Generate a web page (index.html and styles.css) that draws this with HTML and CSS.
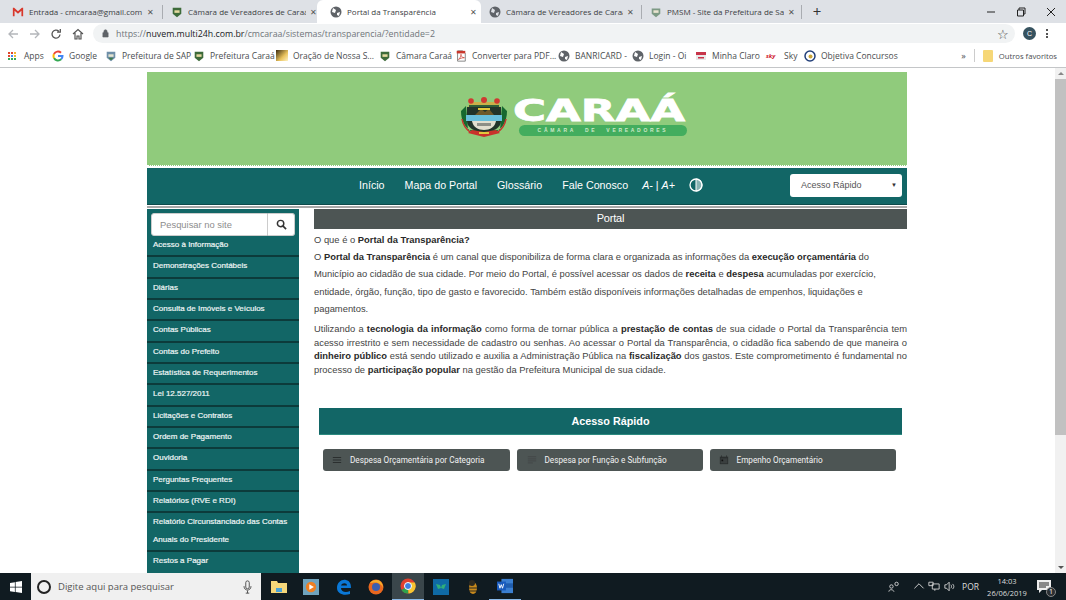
FILE: index.html
```html
<!DOCTYPE html>
<html lang="pt-BR">
<head>
<meta charset="UTF-8">
<title>Portal da Transparência</title>
<link rel="stylesheet" href="styles.css">
</head>
<body>
<div class="screen">

  <div class="tabstrip">
    <div class="tab tab-first">
      <svg class="ico" viewBox="0 0 14 12"><path d="M1 11V1h1.5L7 5l4.500-4H13v10h-2V4.500L7 8 3 4.500V11z" fill="#d8382c"/></svg>
      <span class="tab-title">Entrada - cmcaraa@gmail.com - C</span><span class="tab-x">✕</span>
    </div>
    <div class="tab tab-second">
      <svg class="ico" viewBox="0 0 12 14"><path d="M1 2h10v7l-5 4-5-4z" fill="#3d6b3a"/><rect x="3" y="5" width="6" height="3" fill="#e4d9a0"/></svg>
      <span class="tab-title">Câmara de Vereadores de Caraá</span><span class="tab-x">✕</span>
    </div>
    <div class="tab tab-active">
      <svg class="ico" viewBox="0 0 12 12"><circle cx="6" cy="6" r="5.500" fill="#5f6368"/><path d="M3 2l3 2-1 3-3-1zM7 7l3-1-1 4-2-1z" fill="#fff"/></svg>
      <span class="tab-title">Portal da Transparência</span><span class="tab-x">✕</span>
    </div>
    <div class="tab tab-fourth">
      <svg class="ico" viewBox="0 0 12 12"><circle cx="6" cy="6" r="5.500" fill="#5f6368"/><path d="M3 2l3 2-1 3-3-1zM7 7l3-1-1 4-2-1z" fill="#dee1e6"/></svg>
      <span class="tab-title">Câmara de Vereadores de Caraá -</span><span class="tab-x">✕</span>
    </div>
    <div class="tab tab-last">
      <svg class="ico" viewBox="0 0 12 14"><path d="M1 3h10v6l-5 4-5-4z" fill="#7d9a84"/><rect x="3" y="5" width="6" height="3" fill="#e9e4d0"/></svg>
      <span class="tab-title">PMSM - Site da Prefeitura de San</span><span class="tab-x">✕</span>
    </div>
    <span class="tab-new">+</span>
    <div class="win-controls">
      <svg viewBox="0 0 10 10"><path d="M1 5h8" stroke="#222" fill="none"/></svg>
      <svg viewBox="0 0 10 10"><path d="M1.500 3h6v6h-6zM3 3V1h6v6H7.500" stroke="#222" fill="none"/></svg>
      <svg viewBox="0 0 10 10"><path d="M1 1l8 8M9 1l-8 8" stroke="#222" fill="none"/></svg>
    </div>
  </div>

  <div class="toolbar">
    <svg class="nav-ico" viewBox="0 0 12 12"><path d="M11 6H2M6 2L2 6l4 4" stroke="#b4b7bb" stroke-width="1.300" fill="none"/></svg>
    <svg class="nav-ico" viewBox="0 0 12 12"><path d="M1 6h9M6 2l4 4-4 4" stroke="#b4b7bb" stroke-width="1.300" fill="none"/></svg>
    <svg class="nav-ico" viewBox="0 0 12 12"><path d="M10 6.500A4 4 0 1 1 8.800 3.200M10.300 1v3.200H7.100" stroke="#555" stroke-width="1.300" fill="none"/></svg>
    <svg class="nav-ico" viewBox="0 0 12 12"><path d="M1 6l5-4.500L11 6M3 5v6h2V8h2v3h2V5" stroke="#555" stroke-width="1.200" fill="none"/></svg>
    <div class="omnibox">
      <svg class="lock" viewBox="0 0 8 10"><path d="M1 4h6v5H1zM2.200 4V2.500a1.800 1.800 0 0 1 3.600 0V4" fill="#5f6368" stroke="#5f6368" stroke-width=".7" fill-rule="evenodd"/></svg>
      <span class="url"><span class="url-dim">https://</span>nuvem.multi24h.com.br<span class="url-dim">/cmcaraa/sistemas/transparencia/?entidade=2</span></span>
      <span class="star">☆</span>
    </div>
    <span class="avatar">C</span>
    <span class="kebab"><i></i><i></i><i></i></span>
  </div>

  <div class="bookmarks">
    <div class="bm bm-apps"><span class="apps-grid"><i></i><i></i><i></i><i></i><i></i><i></i><i></i><i></i><i></i></span>Apps</div>
    <div class="bm bm-google">
      <svg class="ico" viewBox="0 0 12 12" fill="none" stroke-width="2">
        <path d="M6 6h4.500a4.500 4.500 0 0 1-1.400 3.300" stroke="#4285f4"/>
        <path d="M9.100 9.300A4.500 4.500 0 0 1 2 8" stroke="#34a853"/>
        <path d="M2 8a4.500 4.500 0 0 1 0-4" stroke="#fbbc05"/>
        <path d="M2 4a4.500 4.500 0 0 1 7-1.300" stroke="#ea4335"/>
      </svg>Google
    </div>
    <div class="bm bm-sap"><svg class="ico" viewBox="0 0 12 14"><path d="M1 2h10v7l-5 4-5-4z" fill="#6f8fa8"/><rect x="3" y="5" width="6" height="3" fill="#e4e4d0"/><path d="M3 9h6l-3 3z" fill="#3d7a45"/></svg>Prefeitura de SAP</div>
    <div class="bm bm-car"><svg class="ico" viewBox="0 0 12 14"><path d="M1 2h10v7l-5 4-5-4z" fill="#3d6b3a"/><rect x="3" y="5" width="6" height="3" fill="#e4d9a0"/></svg>Prefeitura Caraá</div>
    <div class="bm bm-ora"><span class="ora-mark"></span>Oração de Nossa S...</div>
    <div class="bm bm-cam"><svg class="ico" viewBox="0 0 12 14"><path d="M1 2h10v7l-5 4-5-4z" fill="#3d6b3a"/><rect x="3" y="5" width="6" height="3" fill="#e4d9a0"/></svg>Câmara Caraá</div>
    <div class="bm bm-pdf"><svg class="ico" viewBox="0 0 12 14"><path d="M2 1h6l3 3v9H2z" fill="#fff" stroke="#777"/><path d="M1 1h10v3H1z" fill="#c9372c"/><path d="M3 11c2-1 3-4 3-6 0 2 1 4 4 4-3 0-5 1-7 2z" fill="none" stroke="#c9372c" stroke-width=".8"/></svg>Converter para PDF...</div>
    <div class="bm bm-ban"><svg class="ico" viewBox="0 0 12 12"><circle cx="6" cy="6" r="5.500" fill="#5f6368"/><path d="M3 2l3 2-1 3-3-1zM7 7l3-1-1 4-2-1z" fill="#fff"/></svg>BANRICARD -</div>
    <div class="bm bm-oi"><svg class="ico" viewBox="0 0 12 12"><circle cx="6" cy="6" r="5.500" fill="#5f6368"/><path d="M3 2l3 2-1 3-3-1zM7 7l3-1-1 4-2-1z" fill="#fff"/></svg>Login - Oi</div>
    <div class="bm bm-claro"><svg class="ico" viewBox="0 0 12 12"><rect x="1" y="2" width="10" height="8" fill="#e9e9e9"/><rect x="1" y="2" width="10" height="3" fill="#c7354a"/><rect x="3" y="7" width="6" height="1.500" fill="#c7354a"/></svg>Minha Claro</div>
    <div class="bm bm-sky"><span class="sky-mark">sky</span>Sky</div>
    <div class="bm bm-obj"><svg class="ico" viewBox="0 0 12 12"><circle cx="6" cy="6" r="5" fill="#fff" stroke="#23407a" stroke-width="1.500"/><circle cx="6.500" cy="6.500" r="2" fill="#c9a53a"/></svg>Objetiva Concursos</div>
    <div class="bm-right">
      <span class="bm-more">»</span>
      <span class="bm-folder"></span>
      <span>Outros favoritos</span>
    </div>
  </div>

  <div class="viewport">
    <div class="page">
      <div class="wrap">
        <div class="banner">
          <svg class="crest" viewBox="0 0 48 40">
            <path d="M1 14c0 11 5 18 13 22h20c8-4 13-11 13-22l-5-5-2 24H8L6 9z" fill="#16682f"/>
            <path d="M2 22c1 6 4 10 8 13M46 22c-1 6-4 10-8 13" stroke="#c8322c" stroke-width="1.500" fill="none"/>
            <path d="M10 5h28l2 5H8z" fill="#c9b04a"/>
            <path d="M9 8h30v2H9z" fill="#2f5f38"/>
            <circle cx="11" cy="4" r="2.800" fill="#cf3a30"/><circle cx="24" cy="3" r="3" fill="#cf3a30"/><circle cx="37" cy="4" r="2.800" fill="#cf3a30"/>
            <path d="M7 10h34v14c0 7-8 11-17 11S7 31 7 24z" fill="#22352a"/>
            <path d="M15 18l6-6 4 3 4-3 5 6z" fill="#6e5a2a"/>
            <path d="M18 11h12v2H18z" fill="#e2c83c"/>
            <rect x="6" y="18" width="36" height="6" fill="#68c0dc"/>
            <path d="M12 24h24c-1 6-6 9-12 9s-11-3-12-9z" fill="#e2dfcf"/>
            <path d="M17 26h14v3H17z" fill="#8d8f86"/>
            <path d="M12 33l12 2 12-2 4 3-16 4-16-4z" fill="#c8322c"/>
            <path d="M19 35h10v2H19z" fill="#e2c83c"/>
          </svg>
          <div class="logo-text">
            <div class="logo-name">CARAÁ</div>
            <div class="logo-sub">CÂMARA DE VEREADORES</div>
          </div>
        </div>

        <nav class="topnav">
          <a>Início</a>
          <a>Mapa do Portal</a>
          <a>Glossário</a>
          <a>Fale Conosco</a>
          <span class="font-size"><em>A-</em> | <em>A+</em></span>
          <svg class="contrast" viewBox="0 0 14 14">
            <circle cx="7" cy="7" r="6" fill="none" stroke="#fff" stroke-width="1.300"/>
            <path d="M7 1a6 6 0 0 1 0 12zM7 3h5M7 5h6M7 7h6M7 9h6M7 11h5" fill="none" stroke="#fff"/>
          </svg>
          <div class="quick-select">Acesso Rápido<span class="caret">▼</span></div>
        </nav>

        <div class="columns">
          <aside class="sidebar">
            <div class="search">
              <span class="search-input">Pesquisar no site</span>
              <span class="search-btn">
                <svg viewBox="0 0 12 12"><circle cx="5" cy="5" r="3.500" fill="none" stroke="#333" stroke-width="1.600"/><path d="M7.500 7.500L11 11" stroke="#333" stroke-width="1.800"/></svg>
              </span>
            </div>
            <a class="side-link">Acesso à Informação</a>
            <a class="side-link">Demonstrações Contábeis</a>
            <a class="side-link">Diárias</a>
            <a class="side-link">Consulta de Imóveis e Veículos</a>
            <a class="side-link">Contas Públicas</a>
            <a class="side-link">Contas do Prefeito</a>
            <a class="side-link">Estatística de Requerimentos</a>
            <a class="side-link">Lei 12.527/2011</a>
            <a class="side-link">Licitações e Contratos</a>
            <a class="side-link">Ordem de Pagamento</a>
            <a class="side-link">Ouvidoria</a>
            <a class="side-link">Perguntas Frequentes</a>
            <a class="side-link">Relatórios (RVE e RDI)</a>
            <a class="side-link side-link-tall">Relatório Circunstanciado das Contas Anuais do Presidente</a>
            <a class="side-link">Restos a Pagar</a>
          </aside>

          <main class="content">
            <h2 class="portal-title">Portal</h2>
            <p class="intro-q">O que é o <b>Portal da Transparência?</b></p>
            <p class="intro">O <b>Portal da Transparência</b> é um canal que disponibiliza de forma clara e organizada as informações da <b>execução orçamentária</b> do Município ao cidadão de sua cidade. Por meio do Portal, é possível acessar os dados de <b>receita</b> e <b>despesa</b> acumuladas por exercício, entidade, órgão, função, tipo de gasto e favorecido. Também estão disponíveis informações detalhadas de empenhos, liquidações e pagamentos.</p>
            <p class="body-text">Utilizando a <b>tecnologia da informação</b> como forma de tornar pública a <b>prestação de contas</b> de sua cidade o Portal da Transparência tem acesso irrestrito e sem necessidade de cadastro ou senhas. Ao acessar o Portal da Transparência, o cidadão fica sabendo de que maneira o <b>dinheiro público</b> está sendo utilizado e auxilia a Administração Pública na <b>fiscalização</b> dos gastos. Este comprometimento é fundamental no processo de <b>participação popular</b> na gestão da Prefeitura Municipal de sua cidade.</p>

            <h3 class="quick-title">Acesso Rápido</h3>
            <div class="quick-buttons">
              <a class="quick-btn">
                <svg viewBox="0 0 12 12"><path d="M1 3h10M1 6h10M1 9h10" stroke="#2b2f2f" stroke-width="1.200"/></svg>
                Despesa Orçamentária por Categoria
              </a>
              <a class="quick-btn quick-btn-b">
                <svg viewBox="0 0 12 12"><path d="M1 2h10M1 4.500h10M1 7h10M1 9.500h6" stroke="#454a4a" stroke-width="1.500"/></svg>
                Despesa por Função e Subfunção
              </a>
              <a class="quick-btn quick-btn-c">
                <svg viewBox="0 0 12 12"><path d="M1 2h10v9H1z" fill="#2b2f2f"/><path d="M3 .5v2M9 .5v2" stroke="#2b2f2f"/><rect x="2" y="4" width="8" height="6" fill="#3a3f3f"/><rect x="3" y="5.500" width="2" height="2" fill="#111"/></svg>
                Empenho Orçamentário
              </a>
            </div>
          </main>
        </div>
      </div>
    </div>
    <div class="scrollbar">
      <span class="arrow arrow-up"></span>
      <span class="thumb"></span>
      <span class="arrow arrow-down"></span>
    </div>
  </div>

  <div class="taskbar">
    <svg class="start" viewBox="0 0 16 16"><path d="M0 2.500l6.500-1v6H0zM7.500 1.300L16 0v7.500H7.500zM0 8.500h6.500v6l-6.500-1zM7.500 8.500H16V16l-8.500-1.300z" fill="#fff"/></svg>
    <div class="task-search">
      <span class="cortana"></span>
      <span class="task-search-text">Digite aqui para pesquisar</span>
      <svg class="mic" viewBox="0 0 10 16"><rect x="3" y="1" width="4" height="9" rx="2" fill="none" stroke="#444"/><path d="M1 7c0 6 8 6 8 0M5 12v3M3 15h4" fill="none" stroke="#444"/></svg>
    </div>
    <div class="task-apps">
      <span class="task-app"><svg viewBox="0 0 16 14"><path d="M0 1h6l1 2h9v10H0z" fill="#f5d77a"/><rect x="5" y="8" width="6" height="4" fill="#4aa3d8"/></svg></span>
      <span class="task-app"><svg viewBox="0 0 14 14"><rect width="14" height="14" fill="#6fa3bd"/><circle cx="7" cy="7" r="4.500" fill="#ee7f22"/><path d="M5.500 4.500l4 2.500-4 2.500z" fill="#fff"/></svg></span>
      <span class="task-app"><svg viewBox="0 0 16 16"><path d="M15 9H5c0 4 5 5 9 3v3c-6 2-13 0-13-6C1 3 6 0 10 1c4 1 5 4 5 8zM5 6.500h6C11 3.500 6 3.500 5 6.500z" fill="#0a78d7"/></svg></span>
      <span class="task-app"><svg viewBox="0 0 16 16"><circle cx="8" cy="8" r="7.500" fill="#e8671f"/><circle cx="8" cy="8" r="4" fill="#3c5fb0"/><path d="M2 4c2-3 7-4 10-2 2 2 3 4 3 7-1-3-3-4-5-5-3-1-6 0-8 0z" fill="#f6b02a"/></svg></span>
      <span class="task-app task-app-active"><svg viewBox="0 0 16 16"><circle cx="8" cy="8" r="7.500" fill="#e2412f"/><path d="M8 8L1.500 12A7.500 7.500 0 0 0 8.500 15.500z" fill="#2fa24c"/><path d="M8 4.500h6.800a7.500 7.500 0 0 1-6.300 11z" fill="#f7c531"/><circle cx="8" cy="8" r="3.500" fill="#3f7fe0" stroke="#fff"/></svg></span>
      <span class="task-app"><svg viewBox="0 0 16 16"><rect width="16" height="16" fill="#0f6aa5"/><path d="M3 5l4 1 1 3 1-3 4-1-2 5-3-1-3 1z" fill="#2fae7a"/></svg></span>
      <span class="task-app"><svg viewBox="0 0 14 16"><ellipse cx="7" cy="9" rx="4" ry="6" fill="#c98a1c"/><circle cx="6" cy="4" r="3" fill="#2d2a20"/><path d="M3 9h8M3 12h8" stroke="#2d2a20"/></svg></span>
      <span class="task-app task-app-open"><svg viewBox="0 0 18 16"><rect x="5" width="13" height="16" fill="#3b7fd1"/><rect x="5" y="5" width="13" height="5" fill="#1f5dae"/><rect y="3" width="10" height="10" fill="#185abd"/><path d="M2 5.500l1.300 5 1.500-4 1.400 4 1.400-5" stroke="#fff" fill="none"/></svg></span>
    </div>
    <div class="tray">
      <svg class="tray-ico" viewBox="0 0 14 12"><circle cx="4" cy="6" r="2" fill="none" stroke="#ddd"/><circle cx="10" cy="3" r="2" fill="none" stroke="#ddd"/><path d="M1 12c0-3 5-3 6 0" fill="none" stroke="#ddd"/></svg>
      <svg class="tray-ico tray-chevron" viewBox="0 0 12 12"><path d="M1 8l5-5 5 5" fill="none" stroke="#ddd"/></svg>
      <svg class="tray-ico tray-net" viewBox="0 0 14 12"><path d="M1 1h5v4H1zM5 3h8v6H5zM8 9v2" fill="none" stroke="#ddd"/></svg>
      <svg class="tray-ico tray-vol" viewBox="0 0 14 12"><path d="M1 4h2l3-3v10L3 8H1z" fill="none" stroke="#ddd"/><path d="M8 4c1 1 1 3 0 4M10 3c2 2 2 4 0 6" fill="none" stroke="#ddd"/></svg>
      <span class="tray-lang">POR</span>
      <div class="clock"><div>14:03</div><div>26/06/2019</div></div>
      <span class="notif">
        <svg viewBox="0 0 14 13"><path d="M0 0h14v10H5l-3 3v-3H0z" fill="#eee"/><path d="M2 3h10M2 5h10M2 7h7" stroke="#222"/></svg>
        <span class="notif-badge">1</span>
      </span>
    </div>
  </div>

</div>
</body>
</html>
```

FILE: styles.css
```css
* {
  box-sizing: border-box;
}

html, body {
  margin: 0;
  height: 100%;
  overflow: hidden;
}

body {
  font-family: "Liberation Sans", Arial, sans-serif;
  font-size: 10px;
  color: #333;
  background: #fff;
}

.screen {
  display: flex;
  flex-direction: column;
  height: 600px;
}

/* browser tabs */
.tabstrip {
  display: flex;
  align-items: flex-end;
  height: 23px;
  background: #dee1e6;
  font-family: "Open Sans", sans-serif;
  font-size: 8px;
  color: #3c4043;
  flex: none;
}

.tab {
  display: flex;
  align-items: center;
  height: 23px;
  flex: none;
  background: linear-gradient(#a9acb1, #a9acb1) right center / 1px 14px no-repeat;
}

.tab-first {
  width: 163px;
  padding: 0 9px 0 12px;
}

.tab-second {
  width: 154px;
  padding: 0 0 0 8px;
  background: none;
}

.tab-active {
  width: 164px;
  padding: 0 4px 0 13px;
  background: #fff;
  border-radius: 6px 6px 0 0;
}

.tab-fourth {
  width: 161px;
  padding: 0 8px 0 8px;
}

.tab-last {
  width: 160px;
  padding: 0 7px 0 8px;
}

.tab-title {
  flex: 1;
  overflow: hidden;
  white-space: nowrap;
  margin-left: 5px;
}

.tab-x {
  font-size: 8px;
  color: #555;
  margin-left: 4px;
}

.ico {
  width: 12px;
  height: 12px;
  flex: none;
}

.tab-new {
  width: 26px;
  height: 23px;
  line-height: 22px;
  text-align: center;
  font-size: 15px;
  color: #333;
  margin-left: 2px;
}

.win-controls {
  display: flex;
  margin-left: auto;
  height: 23px;
  align-items: center;
  gap: 20px;
  padding-right: 10px;
}

.win-controls svg {
  width: 10px;
  height: 10px;
}

/* address bar */
.toolbar {
  display: flex;
  align-items: center;
  height: 21px;
  background: #fff;
  flex: none;
  padding-left: 7px;
}

.nav-ico {
  width: 12px;
  height: 12px;
  margin-right: 9.500px;
  flex: none;
}

.omnibox {
  display: flex;
  align-items: center;
  width: 922px;
  height: 19px;
  padding: 0 6px 0 9px;
  background: #f1f3f4;
  border-radius: 10px;
  font-family: "Open Sans", sans-serif;
  font-size: 8.800px;
  color: #202124;
  flex: none;
}

.lock {
  width: 7px;
  height: 9px;
  margin-right: 7px;
}

.url-dim {
  color: #70757a;
}

.star {
  margin-left: auto;
  font-size: 13px;
  color: #444;
}

.avatar {
  width: 13px;
  height: 13px;
  margin-left: 8px;
  border-radius: 50%;
  background: #36525f;
  color: #fff;
  font-size: 7px;
  line-height: 13px;
  text-align: center;
  flex: none;
}

.kebab {
  display: flex;
  flex-direction: column;
  gap: 1.500px;
  margin-left: 10px;
}

.kebab i {
  display: block;
  width: 2px;
  height: 2px;
  background: #555;
}

/* bookmarks */
.bookmarks {
  display: flex;
  align-items: center;
  height: 24px;
  background: #fff;
  border-bottom: 1px solid #c4c6c8;
  font-family: "Open Sans", sans-serif;
  font-size: 8.500px;
  color: #4a4d50;
  flex: none;
  padding-left: 8px;
}

.bm {
  display: flex;
  align-items: center;
  gap: 5px;
  white-space: nowrap;
  flex: none;
}

.bm-apps { width: 44px; gap: 8px; }
.bm-google { width: 53px; }
.bm-sap { width: 88px; }
.bm-car { width: 83px; }
.bm-ora { width: 103px; }
.bm-cam { width: 76px; }
.bm-pdf { width: 103px; }
.bm-ban { width: 74px; }
.bm-oi { width: 63px; }
.bm-claro { width: 71px; }
.bm-sky { width: 38px; }

.apps-grid {
  display: grid;
  grid-template-columns: repeat(3, 2px);
  gap: 1px;
}

.apps-grid i {
  width: 2px;
  height: 2px;
  background: #e0452c;
}

.apps-grid i:nth-child(3n) { background: #f2b632; }
.apps-grid i:nth-child(n+7) { background: #34a853; }
.apps-grid i:nth-child(5) { background: #4285f4; }

.ora-mark {
  width: 12px;
  height: 11px;
  background: linear-gradient(135deg, #3a2a10, #e9c25c 60%, #fff3c4);
}

.sky-mark {
  width: 13px;
  color: #d0202e;
  font-size: 6px;
  font-weight: bold;
  font-style: italic;
}

.bm-right {
  display: flex;
  align-items: center;
  margin-left: auto;
  padding-right: 9px;
  font-size: 7.700px;
}

.bm-more {
  font-size: 9px;
  padding-right: 8px;
  border-right: 1px solid #ccc;
  margin-right: 8px;
}

.bm-folder {
  width: 10px;
  height: 12px;
  margin-right: 6px;
  background: #f6d777;
  border-radius: 1px;
}

/* page area */
.viewport {
  display: flex;
  flex: 1;
  min-height: 0;
}

.page {
  flex: 1;
  min-width: 0;
  overflow: hidden;
  background: #fff;
}

.wrap {
  width: 760px;
  margin-left: 147px;
  padding-top: 4px;
}

.banner {
  display: flex;
  align-items: center;
  gap: 5px;
  height: 94px;
  padding: 0 0 4px 313px;
  background: #90cb7c;
  border-bottom: 1px dotted #fff;
}

.crest {
  width: 48px;
  height: 40px;
  flex: none;
}

.logo-text {
  width: 175px;
}

.logo-name {
  height: 26px;
  font-family: "DejaVu Sans", sans-serif;
  font-size: 30px;
  line-height: 28px;
  font-weight: bold;
  color: #fff;
  -webkit-text-stroke: 0.800px #fff;
  transform: scaleX(1.500);
  transform-origin: left;
}

.logo-sub {
  width: 168px;
  height: 11px;
  margin: 2px 0 0 6px;
  border-radius: 6px;
  background: #43ad5e;
  color: #cfe9c8;
  font-size: 5px;
  font-weight: bold;
  line-height: 11px;
  letter-spacing: 2.700px;
  text-align: center;
  word-spacing: 5px;
}

.topnav {
  display: flex;
  align-items: center;
  height: 37px;
  margin-top: 2px;
  padding: 0 5px 2px 212px;
  background: #126666;
  border-bottom: 1px solid #0d4a4a;
  color: #fff;
  font-size: 10.700px;
}

.topnav a {
  margin-right: 20px;
}

.font-size {
  margin-left: -6px;
}

.contrast {
  width: 14px;
  height: 14px;
  margin-left: 14px;
}

.quick-select {
  display: flex;
  align-items: center;
  justify-content: space-between;
  width: 112px;
  height: 23px;
  margin-left: auto;
  padding: 0 5px 0 11px;
  border-radius: 3px;
  background: #fff;
  color: #555;
  font-size: 9px;
}

.caret {
  font-size: 6px;
  color: #333;
}

.columns {
  display: flex;
  gap: 15px;
  align-items: flex-start;
  margin-top: 1px;
  padding-top: 1px;
  border-top: 2px solid #a8a8a8;
}

/* left menu */
.sidebar {
  width: 152px;
  flex: none;
  background: #126666;
}

.search {
  display: flex;
  height: 27px;
  margin: 0 4px;
  padding-top: 4px;
}

.search-input {
  flex: 1;
  height: 23px;
  padding-left: 8px;
  background: #fff;
  border: 1px solid #ccc;
  border-radius: 3px 0 0 3px;
  color: #8d8d8d;
  font-size: 9.400px;
  line-height: 21px;
}

.search-btn {
  display: flex;
  align-items: center;
  justify-content: center;
  width: 27px;
  height: 23px;
  background: #fff;
  border: 1px solid #ccc;
  border-left: 0;
  border-radius: 0 3px 3px 0;
}

.search-btn svg {
  width: 11px;
  height: 11px;
}

.side-link {
  display: block;
  padding: 2px 6px 0;
  min-height: 21.350px;
  border-bottom: 2px solid #0c3b3b;
  color: #eef5f5;
  font-size: 8px;
  line-height: 14px;
  -webkit-text-stroke: 0.200px #eef5f5;
}

.side-link-tall {
  padding-top: 0;
  padding-bottom: 1px;
  line-height: 18px;
  min-height: 39px;
}

.side-link:last-child {
  border-bottom: 0;
}

/* main column */
.content {
  flex: 1;
  min-width: 0;
}

.portal-title {
  height: 20px;
  margin: 0 0 4px;
  background: #4d5554;
  color: #fff;
  font-size: 11px;
  font-weight: normal;
  line-height: 19px;
  text-align: center;
  letter-spacing: -0.200px;
}

.content p {
  margin: 0;
  color: #444;
  font-size: 9.400px;
}

.content b {
  color: #2a2a2a;
}

.intro-q {
  line-height: 14px;
}

.content .intro {
  line-height: 17.300px;
  margin: 1px 0 5px;
}

.body-text {
  line-height: 13.500px;
  text-align: justify;
}

.quick-title {
  height: 27px;
  margin: 32px 5px 14px;
  background: #126666;
  border-bottom: 1px solid #2c8a80;
  color: #fff;
  font-size: 10.800px;
  line-height: 26px;
  text-align: center;
}

.quick-buttons {
  display: flex;
  margin: 0 5px 0 9px;
  gap: 6.500px;
}

.quick-btn {
  display: flex;
  align-items: center;
  gap: 8px;
  width: 187px;
  height: 22px;
  padding-left: 9px;
  border-radius: 3px;
  background: #4d5554;
  color: #f2f2f2;
  font-family: Roboto, sans-serif;
  font-size: 8.200px;
}

.quick-btn-b {
  padding-left: 10px;
  width: 186.500px;
}

.quick-btn-c {
  width: 186px;
}

.quick-btn svg {
  width: 10px;
  height: 10px;
  flex: none;
}

/* window scrollbar */
.scrollbar {
  display: flex;
  flex-direction: column;
  align-items: center;
  width: 11px;
  background: #f1f1f1;
  flex: none;
}

.thumb {
  width: 100%;
  height: 356px;
  background: #c1c1c1;
}

.arrow {
  width: 0;
  height: 0;
  border-left: 3px solid transparent;
  border-right: 3px solid transparent;
  margin: 4px 0;
}

.arrow-up {
  border-bottom: 3px solid #888;
}

.arrow-down {
  margin-top: auto;
  border-top: 3px solid #555;
}

/* windows taskbar */
.taskbar {
  display: flex;
  align-items: center;
  height: 27px;
  background: #101b21;
  color: #ddd;
  flex: none;
}

.start {
  width: 12px;
  height: 12px;
  margin: 0 9px 0 10px;
  flex: none;
}

.task-search {
  display: flex;
  align-items: center;
  width: 230px;
  height: 27px;
  padding: 0 9px 0 6px;
  background: #f0f0f0;
  color: #555;
  font-family: "Open Sans", sans-serif;
  font-size: 9.500px;
  flex: none;
}

.cortana {
  width: 14px;
  height: 14px;
  margin-right: 7px;
  border: 2px solid #222;
  border-radius: 50%;
}

.mic {
  width: 9px;
  height: 14px;
  margin-left: auto;
}

.task-apps {
  display: flex;
  height: 27px;
  margin-left: 2px;
}

.task-app {
  display: flex;
  align-items: center;
  justify-content: center;
  width: 32.300px;
  height: 27px;
}

.task-app svg {
  width: 16px;
  height: 16px;
}

.task-app-active {
  background: #3a464b;
  border-bottom: 1px solid #8ab9e8;
}

.task-app-open {
  border-bottom: 1px solid #8ab9e8;
}

.tray {
  display: flex;
  align-items: center;
  margin-left: auto;
  font-family: "Open Sans", sans-serif;
  font-size: 8.500px;
}

.tray-ico {
  width: 12px;
  height: 11px;
}

.tray-chevron {
  margin-left: 13px;
}

.tray-net {
  margin-left: 3px;
}

.tray-vol {
  margin-left: 4px;
}

.tray-lang {
  margin: 0 3px 0 6px;
}

.clock {
  width: 50px;
  text-align: center;
  font-size: 7.500px;
  line-height: 12px;
}

.notif {
  position: relative;
  display: block;
  width: 14px;
  height: 13px;
  margin: 0 15px 0 5px;
}

.notif svg {
  display: block;
  width: 14px;
  height: 13px;
}

.notif-badge {
  position: absolute;
  right: -5px;
  bottom: -4px;
  width: 10px;
  height: 10px;
  border-radius: 50%;
  background: #2b2f33;
  border: 1px solid #888;
  color: #fff;
  font-size: 7px;
  line-height: 8px;
  text-align: center;
}
```
